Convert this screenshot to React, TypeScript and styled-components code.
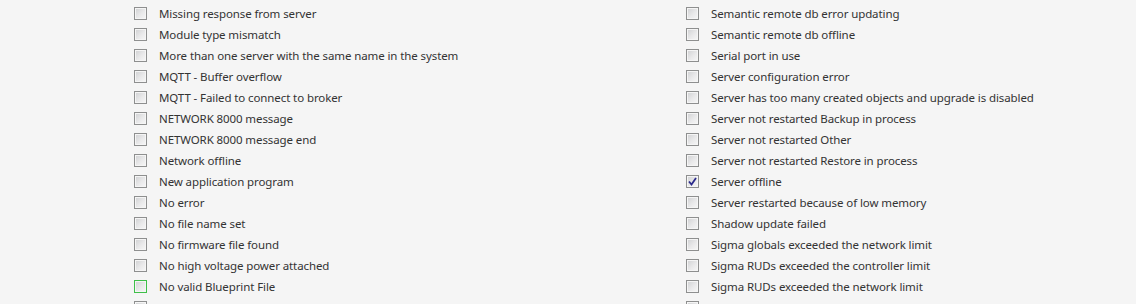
import styled, { createGlobalStyle } from "styled-components";

const GlobalStyle = createGlobalStyle`
    html, body {
        margin: 0;
        padding: 0;
        background: #f5f5f5;
        overflow: hidden;
    }
`;

const Page = styled.div`
    display: grid;
    grid-template-columns: 552px 1fr;
    padding: 3px 0 0 134px;
    font-family: "Noto Sans", "Open Sans", sans-serif;
    font-size: 11.5px;
    letter-spacing: -0.1px;
    color: #333;
`;

const Column = styled.div`
    display: flex;
    flex-direction: column;
`;

const Row = styled.label`
    display: flex;
    align-items: center;
    gap: 12px;
    height: 21px;
    white-space: nowrap;
`;

const Box = styled.span<{ $focused?: boolean }>`
    box-sizing: border-box;
    width: 13px;
    height: 13px;
    flex: none;
    padding: 1px;
    border: 1px solid ${(p) => (p.$focused ? "#3fbf4a" : "#8e8f8f")};
    background: #f4f4f4;
    background-image: linear-gradient(135deg, #cfd0d2 0%, #e9e9ea 55%, #f7f7f7 100%);
    background-clip: content-box;
    display: flex;
    align-items: center;
    justify-content: center;
`;

const Check = styled.svg`
    width: 9px;
    height: 9px;
`;

type Item = { text: string; checked?: boolean; focused?: boolean };

const left: Item[] = [
    { text: "Missing response from server" },
    { text: "Module type mismatch" },
    { text: "More than one server with the same name in the system" },
    { text: "MQTT - Buffer overflow" },
    { text: "MQTT - Failed to connect to broker" },
    { text: "NETWORK 8000 message" },
    { text: "NETWORK 8000 message end" },
    { text: "Network offline" },
    { text: "New application program" },
    { text: "No error" },
    { text: "No file name set" },
    { text: "No firmware file found" },
    { text: "No high voltage power attached" },
    { text: "No valid Blueprint File", focused: true },
    { text: "No network definition file found" },
];

const right: Item[] = [
    { text: "Semantic remote db error updating" },
    { text: "Semantic remote db offline" },
    { text: "Serial port in use" },
    { text: "Server configuration error" },
    { text: "Server has too many created objects and upgrade is disabled" },
    { text: "Server not restarted Backup in process" },
    { text: "Server not restarted Other" },
    { text: "Server not restarted Restore in process" },
    { text: "Server offline", checked: true },
    { text: "Server restarted because of low memory" },
    { text: "Shadow update failed" },
    { text: "Sigma globals exceeded the network limit" },
    { text: "Sigma RUDs exceeded the controller limit" },
    { text: "Sigma RUDs exceeded the network limit" },
    { text: "Simulation" },
];

function CheckRow({ item }: { item: Item }) {
    return (
        <Row>
            <Box $focused={item.focused}>
                {item.checked && (
                    <Check viewBox="0 0 9 9">
                        <path d="M1 4.5 L3.5 7.5 L8 1" fill="none" stroke="#2b2a8c" strokeWidth="1.8" />
                    </Check>
                )}
            </Box>
            <span>{item.text}</span>
        </Row>
    );
}

export default function App() {
    return (
        <>
            <GlobalStyle />
            <Page>
                <Column>
                    {left.map((it) => (
                        <CheckRow key={it.text} item={it} />
                    ))}
                </Column>
                <Column>
                    {right.map((it) => (
                        <CheckRow key={it.text} item={it} />
                    ))}
                </Column>
            </Page>
        </>
    );
}
